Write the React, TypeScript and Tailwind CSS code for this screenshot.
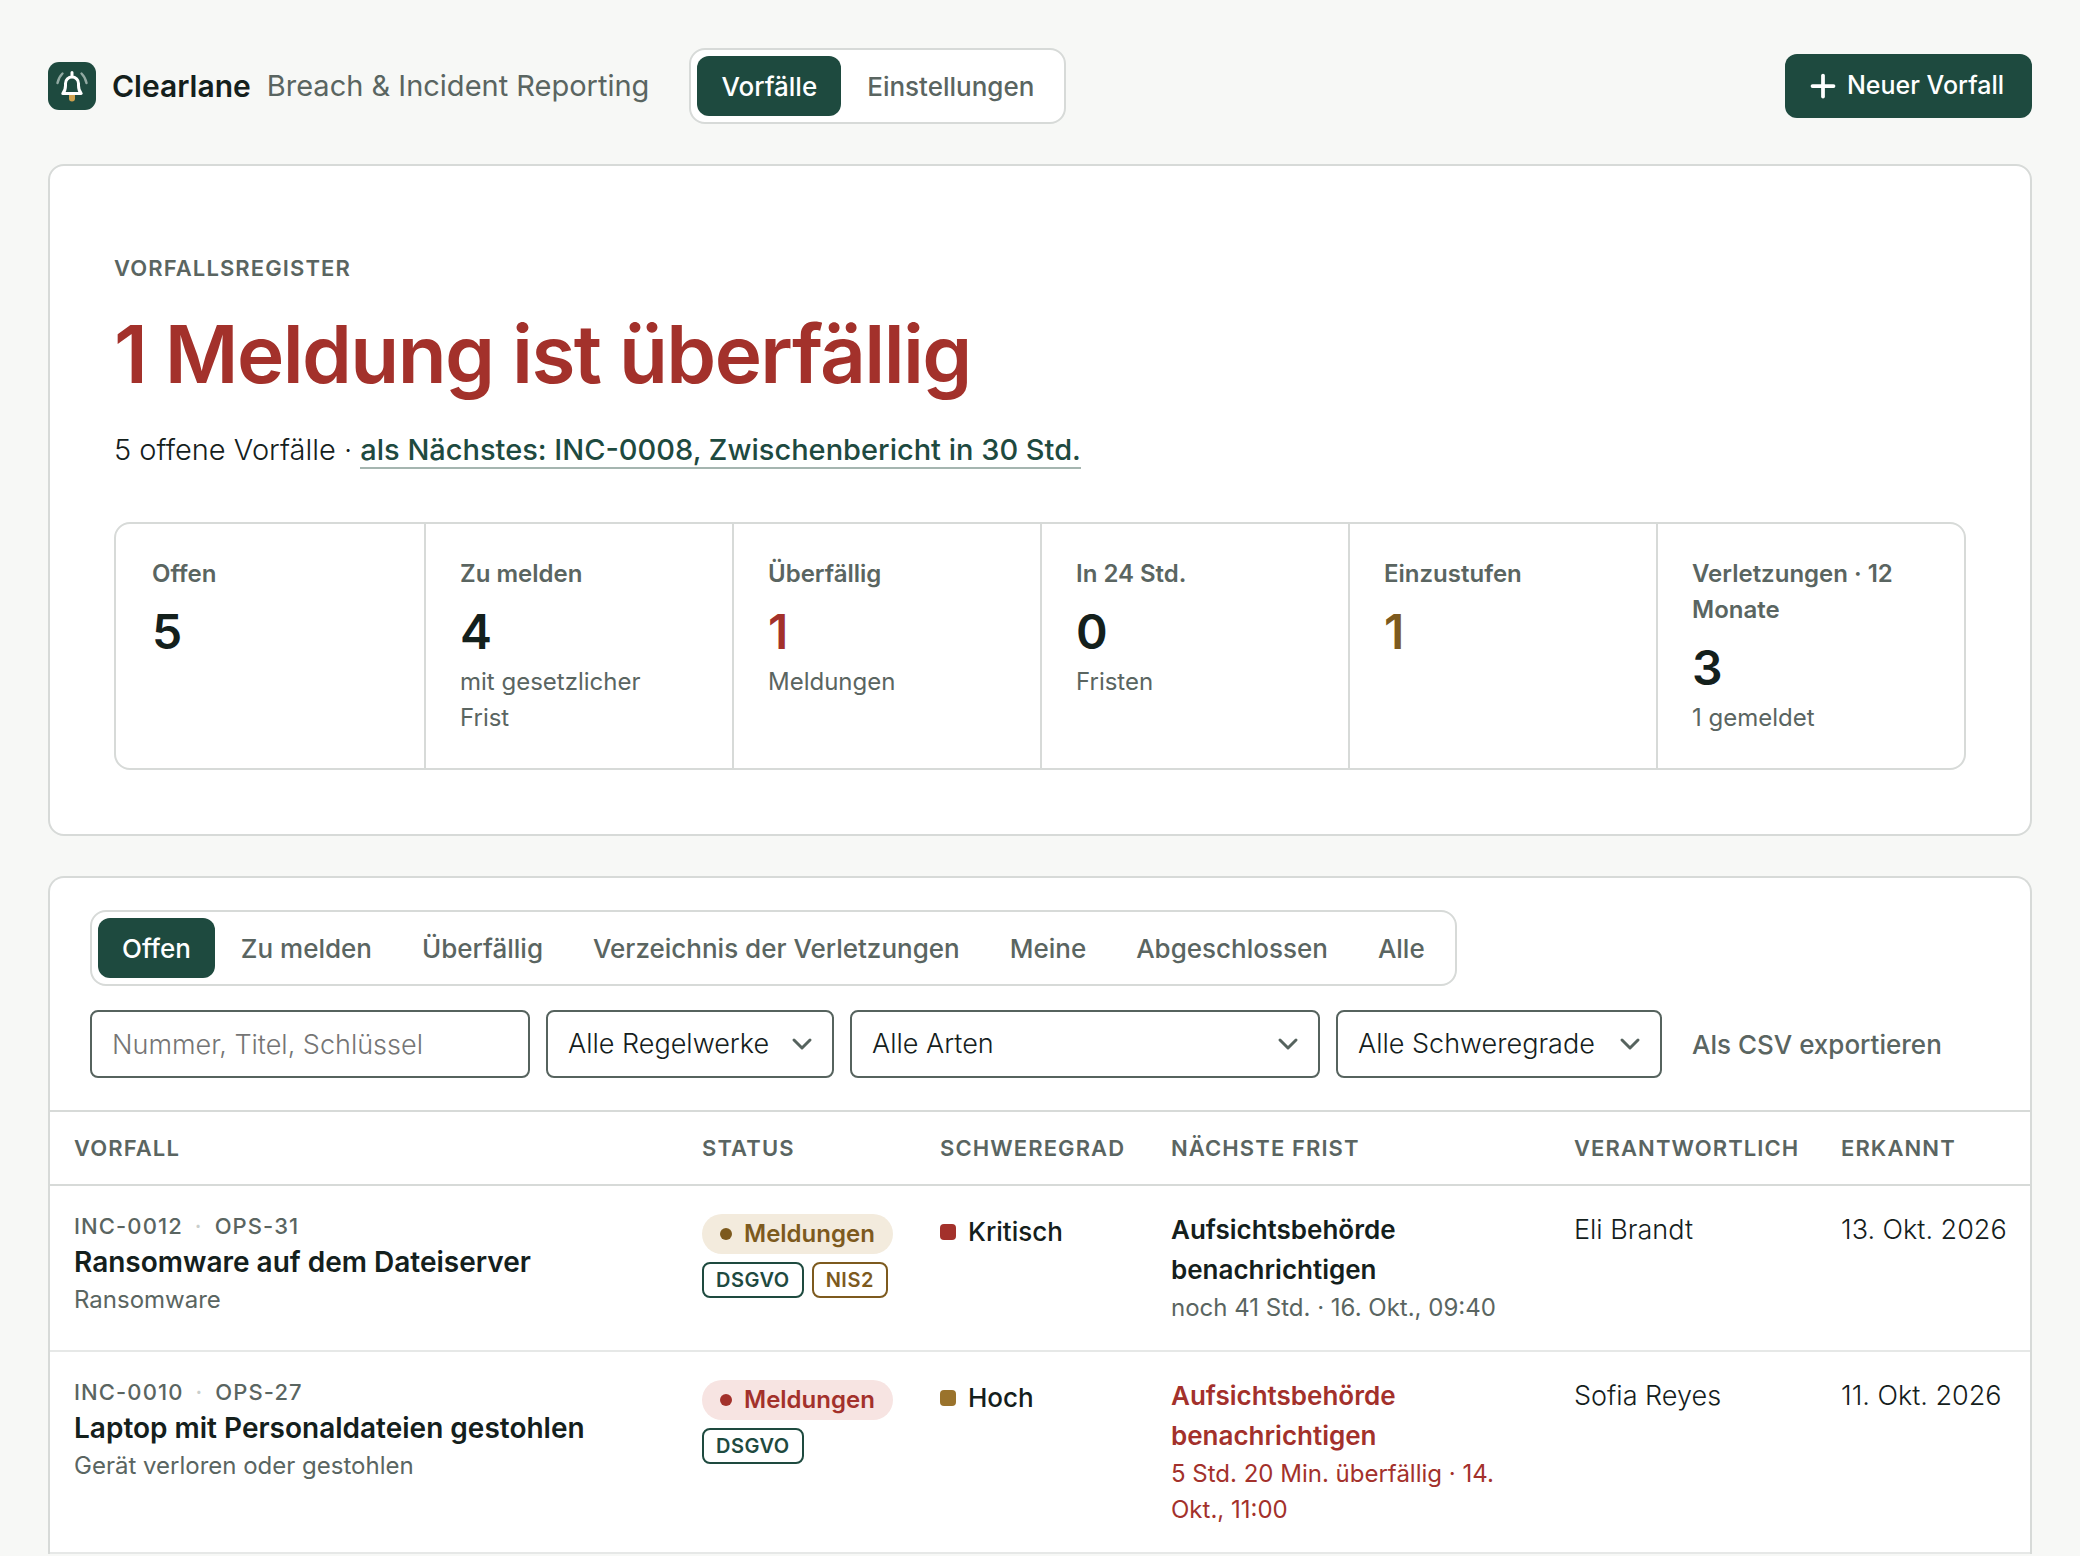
import { ChevronDown, Plus } from "lucide-react";
import clsx from "clsx";

type Tone = "ink" | "red" | "amber";

interface Stat {
  label: string;
  value: number;
  tone: Tone;
  note?: string;
}

interface Incident {
  id: string;
  reference: string;
  title: string;
  kind: string;
  status: string;
  statusTone: "amber" | "red";
  regimes: string[];
  severity: string;
  deadline: string;
  remaining: string;
  overdue: boolean;
  owner: string;
  detected: string;
}

const toneText = {
  ink: "text-[#14201c]",
  red: "text-[#a3312b]",
  amber: "text-[#7d5a1e]",
};

const pillTone = {
  amber: "bg-[#f3ebdd] text-[#7d5a1e]",
  red: "bg-[#f7e4e2] text-[#a3312b]",
};

const severityColors: Record<string, string> = {
  Kritisch: "bg-[#a3312b]",
  Hoch: "bg-[#9a732c]",
};

const regimeTone: Record<string, string> = {
  DSGVO: "border-[#1e4a3f] text-[#1e4a3f]",
  NIS2: "border-[#7d5a1e] text-[#7d5a1e]",
};

const stats: Stat[] = [
  { label: "Offen", value: 5, tone: "ink" },
  { label: "Zu melden", value: 4, tone: "ink", note: "mit gesetzlicher Frist" },
  { label: "Überfällig", value: 1, tone: "red", note: "Meldungen" },
  { label: "In 24 Std.", value: 0, tone: "ink", note: "Fristen" },
  { label: "Einzustufen", value: 1, tone: "amber" },
  { label: "Verletzungen · 12 Monate", value: 3, tone: "ink", note: "1 gemeldet" },
];

const views = [
  "Offen",
  "Zu melden",
  "Überfällig",
  "Verzeichnis der Verletzungen",
  "Meine",
  "Abgeschlossen",
  "Alle",
];

const columns = [
  { label: "Vorfall", width: "w-auto" },
  { label: "Status", width: "w-[238px]" },
  { label: "Schweregrad", width: "w-[231px]" },
  { label: "Nächste Frist", width: "w-[403px]" },
  { label: "Verantwortlich", width: "w-[267px]" },
  { label: "Erkannt", width: "w-[213px]" },
];

const incidents: Incident[] = [
  {
    id: "INC-0012",
    reference: "OPS-31",
    title: "Ransomware auf dem Dateiserver",
    kind: "Ransomware",
    status: "Meldungen",
    statusTone: "amber",
    regimes: ["DSGVO", "NIS2"],
    severity: "Kritisch",
    deadline: "Aufsichtsbehörde benachrichtigen",
    remaining: "noch 41 Std. · 16. Okt., 09:40",
    overdue: false,
    owner: "Eli Brandt",
    detected: "13. Okt. 2026",
  },
  {
    id: "INC-0010",
    reference: "OPS-27",
    title: "Laptop mit Personaldateien gestohlen",
    kind: "Gerät verloren oder gestohlen",
    status: "Meldungen",
    statusTone: "red",
    regimes: ["DSGVO"],
    severity: "Hoch",
    deadline: "Aufsichtsbehörde benachrichtigen",
    remaining: "5 Std. 20 Min. überfällig · 14. Okt., 11:00",
    overdue: true,
    owner: "Sofia Reyes",
    detected: "11. Okt. 2026",
  },
];

function Logo() {
  return (
    <svg viewBox="0 0 48 48" className="size-12 shrink-0" fill="none" aria-hidden="true">
      <rect width="48" height="48" rx="11" fill="#1e4a3f" />
      <path d="M21 33h6v3.500a3 3 0 0 1-6 0z" fill="#d0a24f" />
      <path
        d="M14.800 31.500c1.800-2 2.700-4 2.700-8v-2a6.500 6.500 0 0 1 13 0v2c0 4 .900 6 2.700 8zM24 14.500v-4"
        stroke="#fff"
        strokeWidth="3"
        strokeLinecap="round"
        strokeLinejoin="round"
      />
      <path
        d="M14.500 11.500q-4 4-5 9.500M33.500 11.500q4 4 5 9.500"
        stroke="#93aaa3"
        strokeWidth="2.400"
        strokeLinecap="round"
      />
    </svg>
  );
}

interface SegmentedProps {
  items: string[];
  active: string;
  label: string;
}

function Segmented({ items, active, label }: SegmentedProps) {
  return (
    <nav
      aria-label={label}
      className="flex w-fit gap-0.5 rounded-2xl border-2 border-[#d7dad8] bg-white p-1.5"
    >
      {items.map((item) => (
        <button
          key={item}
          type="button"
          className={clsx(
            "h-15 whitespace-nowrap rounded-xl px-6 font-medium text-[26px]",
            item === active ? "bg-[#1e4a3f] text-white" : "text-[#5a6561]",
          )}
        >
          {item}
        </button>
      ))}
    </nav>
  );
}

interface FilterSelectProps {
  label: string;
  option: string;
  width: string;
}

function FilterSelect({ label, option, width }: FilterSelectProps) {
  return (
    <div className={clsx("relative", width)}>
      <select
        aria-label={label}
        className="h-17 w-full appearance-none rounded-lg border-2 border-[#56635e] bg-white pr-14 pl-5 text-[27px] text-[#14201c]"
      >
        <option>{option}</option>
      </select>
      <ChevronDown
        className="pointer-events-none absolute top-4.5 right-4 text-[#56635e]"
        size={32}
        strokeWidth={2.25}
      />
    </div>
  );
}

function StatCell({ stat }: { stat: Stat }) {
  return (
    <div className="border-[#d7dad8] border-l-2 py-8 pr-11 pl-8.5 first:border-transparent">
      <p className="font-semibold text-[#5a6561] text-[24px] leading-9">{stat.label}</p>
      <p className={clsx("mt-3 mb-1 font-semibold text-[48px] leading-14", toneText[stat.tone])}>
        {stat.value}
      </p>
      {stat.note && (
        <p className="font-normal text-[#5a6561] text-[24px] leading-9">{stat.note}</p>
      )}
    </div>
  );
}

function IncidentRow({ incident }: { incident: Incident }) {
  return (
    <tr className="border-[#e6e8e7] border-b-2 align-top">
      <td className="px-6 py-6">
        <p className="flex gap-3 font-medium text-[#5a6561] text-[22px] leading-8 tracking-wider">
          <span>{incident.id}</span>
          <span className="text-[#c9cecb]">·</span>
          <span>{incident.reference}</span>
        </p>
        <a href="#" className="block font-semibold text-[28px] leading-10">
          {incident.title}
        </a>
        <p className="font-normal text-[#5a6561] text-[24px] leading-9">{incident.kind}</p>
      </td>
      <td className="px-6 py-7">
        <span
          className={clsx(
            "inline-flex h-10 items-center gap-3 rounded-full px-4.5 font-semibold text-[24px]",
            pillTone[incident.statusTone],
          )}
        >
          <span className="size-3 rounded-full bg-current" />
          {incident.status}
        </span>
        <div className="mt-2 flex gap-2">
          {incident.regimes.map((regime) => (
            <span
              key={regime}
              className={clsx(
                "flex h-9 items-center rounded-lg border-2 px-3 font-semibold text-[20px] tracking-wide",
                regimeTone[regime],
              )}
            >
              {regime}
            </span>
          ))}
        </div>
      </td>
      <td className="px-6 py-6.5">
        <span className="flex items-center gap-3 font-medium text-[26px] leading-10">
          <span className={clsx("size-4 rounded-sm", severityColors[incident.severity])} />
          {incident.severity}
        </span>
      </td>
      <td className={clsx("px-6 py-6", incident.overdue && "text-[#a3312b]")}>
        <p className="font-semibold text-[26px] leading-10">{incident.deadline}</p>
        <p
          className={clsx(
            "font-normal text-[24px] leading-9",
            !incident.overdue && "text-[#5a6561]",
          )}
        >
          {incident.remaining}
        </p>
      </td>
      <td className="px-6 py-6 text-[27px] leading-10">{incident.owner}</td>
      <td className="whitespace-nowrap py-6 pl-6 text-[27px] leading-10">{incident.detected}</td>
    </tr>
  );
}

function App() {
  return (
    <div className="min-h-screen bg-[#f7f8f6] px-12 pt-12 font-['Inter',sans-serif] font-light text-[#14201c]">
      <header className="flex items-center">
        <Logo />
        <span className="ml-4 font-semibold text-[30px]">Clearlane</span>
        <span className="ml-4 font-normal text-[#5a6561] text-[29px]">Breach & Incident Reporting</span>
        <div className="ml-10">
          <Segmented items={["Vorfälle", "Einstellungen"]} active="Vorfälle" label="Bereiche" />
        </div>
        <button
          type="button"
          className="ml-auto flex h-16 items-center gap-1.5 rounded-xl bg-[#1e4a3f] pr-7 pl-5 font-medium text-[25px] text-white"
        >
          <Plus size={36} strokeWidth={2.5} />
          Neuer Vorfall
        </button>
      </header>

      <section className="mt-10 rounded-2xl border-2 border-[#d7dad8] bg-white p-16 pt-21">
        <p className="font-semibold text-[#5a6561] text-[22px] uppercase leading-9 tracking-wider">
          Vorfallsregister
        </p>
        <h1 className="mt-5 font-semibold text-[#a3312b] text-[80px] leading-24 tracking-[-0.02em]">
          1 Meldung ist überfällig
        </h1>
        <p className="mt-6.5 text-[29px] leading-11">
          5 offene Vorfälle ·{" "}
          <a href="#" className="border-[#a5b5b0] border-b-2 font-medium text-[#1e4a3f]">
            als Nächstes: INC-0008, Zwischenbericht in 30 Std.
          </a>
        </p>
        <div className="mt-12.5 grid grid-cols-6 rounded-2xl border-2 border-[#d7dad8]">
          {stats.map((stat) => (
            <StatCell key={stat.label} stat={stat} />
          ))}
        </div>
      </section>

      <section className="mt-10 overflow-hidden rounded-t-2xl border-2 border-[#d7dad8] border-b-0 bg-white">
        <div className="flex flex-col gap-6 border-[#d7dad8] border-b-2 px-10 py-8">
          <Segmented items={views} active="Offen" label="Ansichten" />
          <div className="flex items-center gap-4">
            <input
              type="search"
              aria-label="Vorfälle durchsuchen"
              placeholder="Nummer, Titel, Schlüssel"
              className="h-17 w-110 rounded-lg border-2 border-[#56635e] px-5 text-[27px] placeholder:text-[#757575]"
            />
            <FilterSelect label="Regelwerk" option="Alle Regelwerke" width="w-72" />
            <FilterSelect label="Art" option="Alle Arten" width="w-[470px]" />
            <FilterSelect label="Schweregrad" option="Alle Schweregrade" width="w-[326px]" />
            <button type="button" className="px-3.5 font-medium text-[#5a6561] text-[26px]">
              Als CSV exportieren
            </button>
          </div>
        </div>
        <table className="w-full table-fixed text-left">
          <thead>
            <tr className="border-[#d7dad8] border-b-2">
              {columns.map((column) => (
                <th
                  key={column.label}
                  scope="col"
                  className={clsx(
                    "h-[73px] px-6 font-semibold text-[#5a6561] text-[22px] uppercase tracking-wider",
                    column.width,
                  )}
                >
                  {column.label}
                </th>
              ))}
            </tr>
          </thead>
          <tbody>
            {incidents.map((incident) => (
              <IncidentRow key={incident.id} incident={incident} />
            ))}
          </tbody>
        </table>
      </section>
    </div>
  );
}

export default App;
